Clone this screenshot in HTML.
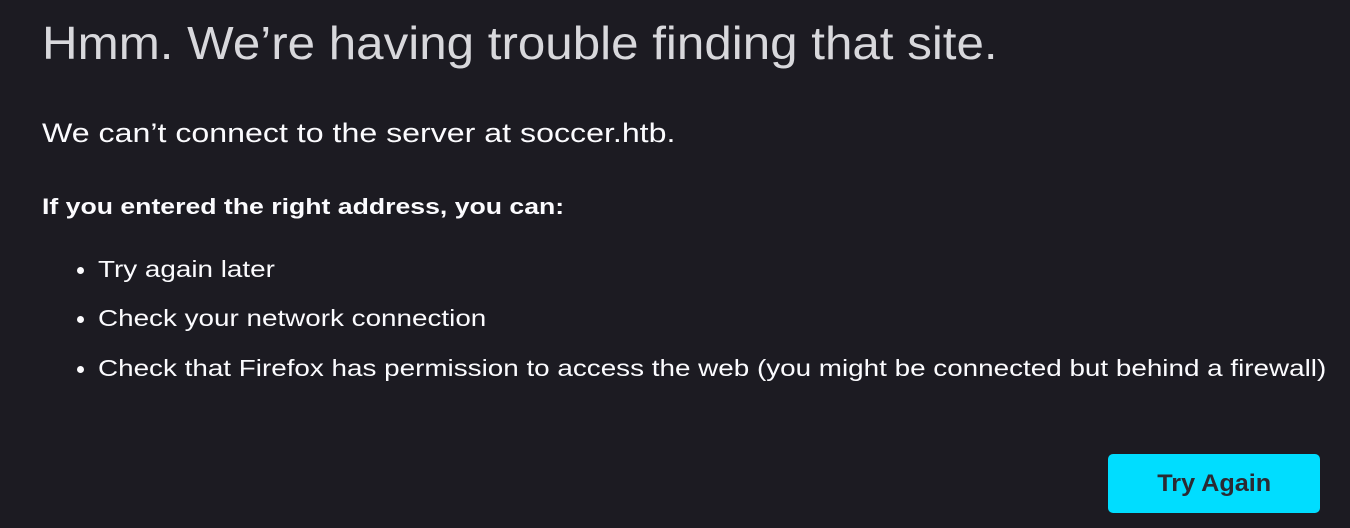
<!DOCTYPE html>
<html><head><meta charset="utf-8"><style>
html,body{margin:0;padding:0;background:#1c1b22;width:1350px;height:528px;overflow:hidden;color:#fbfbfe;font-family:"Liberation Sans",sans-serif}
.t{position:absolute;white-space:nowrap;transform-origin:0 0;line-height:1}
.b{position:absolute;width:7px;height:7px;border-radius:50%;background:#fbfbfe;left:77px}
.btn{position:absolute;left:1108px;top:454px;width:212px;height:59px;background:#00ddff;border-radius:5px;color:#2b2a33;font-weight:bold;font-size:24px;text-align:center;line-height:59px}
.btn span{display:inline-block;transform:scaleX(1.05)}
</style></head><body>
<div class="t" style="left:42px;top:20px;font-size:46px;color:#d8d8dc;transform:scaleX(1.072)">Hmm. We’re having trouble finding that site.</div>
<div class="t" style="left:42px;top:120px;font-size:27px;transform:scaleX(1.19)">We can’t connect to the server at soccer.htb.</div>
<div class="t" style="left:42px;top:196px;font-size:22px;font-weight:bold;transform:scaleX(1.21)">If you entered the right address, you can:</div>
<div class="b" style="top:267px"></div>
<div class="t" style="left:98px;top:258px;font-size:23px;transform:scaleX(1.21)">Try again later</div>
<div class="b" style="top:316px"></div>
<div class="t" style="left:98px;top:307px;font-size:23px;transform:scaleX(1.21)">Check your network connection</div>
<div class="b" style="top:366px"></div>
<div class="t" style="left:98px;top:357px;font-size:23px;transform:scaleX(1.21)">Check that Firefox has permission to access the web (you might be connected but behind a firewall)</div>
<div class="btn"><span>Try Again</span></div>
</body></html>
